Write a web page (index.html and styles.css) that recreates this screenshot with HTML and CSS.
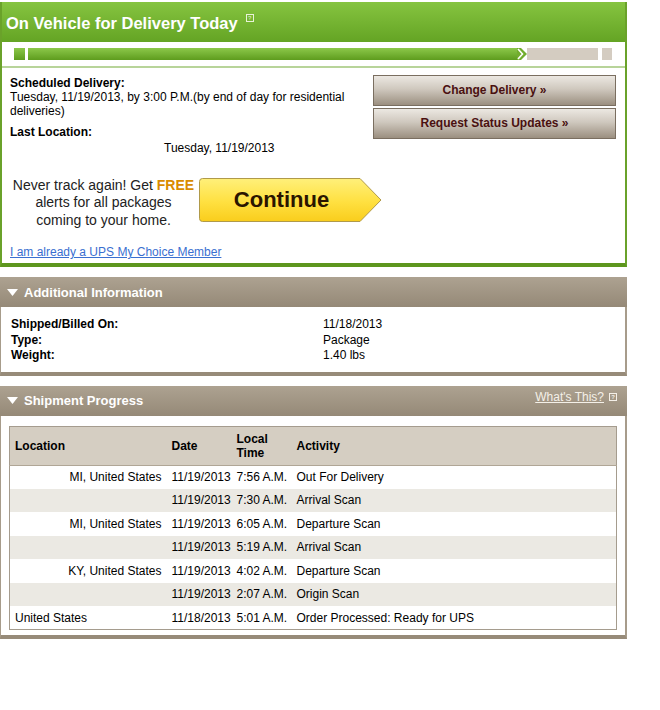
FILE: index.html
```html
<!DOCTYPE html>
<html lang="en">
<head>
    <meta charset="UTF-8">
    <meta name="viewport" content="width=device-width, initial-scale=1.0">
    <title>Tracking Detail</title>
<link rel="stylesheet" href="styles.css">
</head>
<body>
    <div class="status-panel">
        <div class="status-head">
            <h1>On Vehicle for Delivery Today</h1>
            <span class="help-box">?</span>
        </div>
        <div class="progress-strip">
            <div class="prog-sq done"></div>
            <div class="prog-bar done"></div>
            <svg class="prog-arrow" width="10" height="12" viewBox="0 0 10 12">
                <polygon points="0,0 4,0 10,6 4,12 0,12 0,0" fill="#72ad2e"/>
                <polyline points="1,1 5.5,6 1,11" fill="none" stroke="#ffffff" stroke-width="1.6"/>
            </svg>
            <div class="prog-bar todo"></div>
            <div class="prog-sq todo"></div>
        </div>
        <div class="status-body">
            <div class="status-info">
                <div class="label">Scheduled Delivery:</div>
                <div class="value">Tuesday, 11/19/2013, by 3:00 P.M.(by end of day for residential deliveries)</div>
                <div class="label gap">Last Location:</div>
                <div class="last-date">Tuesday, 11/19/2013</div>
            </div>
            <div class="status-actions">
                <a class="grey-btn" href="#">Change Delivery &raquo;</a>
                <a class="grey-btn" href="#">Request Status Updates &raquo;</a>
            </div>
        </div>
        <div class="promo">
            <p class="promo-text">Never track again! Get <b>FREE</b><br>alerts for all packages<br>coming to your home.</p>
            <a class="continue-btn" href="#">
                <svg width="183" height="44" viewBox="0 0 183 44">
                    <defs>
                        <linearGradient id="yel" x1="0" y1="0" x2="0" y2="1">
                            <stop offset="0" stop-color="#fff07a"/>
                            <stop offset="0.55" stop-color="#ffe040"/>
                            <stop offset="1" stop-color="#f9cd1c"/>
                        </linearGradient>
                    </defs>
                    <path d="M3.5 0.5 H161 L182 22 L161 43.5 H3.5 Q0.5 43.5 0.5 40.5 V3.5 Q0.5 0.5 3.5 0.5 Z" fill="url(#yel)" stroke="#b09a4a" stroke-width="1"/>
                </svg>
                <span>Continue</span>
            </a>
        </div>
        <a class="member-link" href="#">I am already a UPS My Choice Member</a>
    </div>

    <div class="grey-panel">
        <div class="grey-head">
            <svg class="tri" width="11" height="7" viewBox="0 0 11 7"><polygon points="0,0 11,0 5.5,7" fill="#ffffff"/></svg>
            Additional Information
        </div>
        <div class="grey-body info-body">
            <div class="info-row"><b>Shipped/Billed On:</b><span>11/18/2013</span></div>
            <div class="info-row"><b>Type:</b><span>Package</span></div>
            <div class="info-row"><b>Weight:</b><span>1.40 lbs</span></div>
        </div>
    </div>

    <div class="grey-panel">
        <div class="grey-head">
            <svg class="tri" width="11" height="7" viewBox="0 0 11 7"><polygon points="0,0 11,0 5.5,7" fill="#ffffff"/></svg>
            Shipment Progress
            <a class="whats-this" href="#">What's This?</a>
            <span class="help-box light">?</span>
        </div>
        <div class="grey-body">
            <table class="progress-table">
                <thead>
                    <tr>
                        <th class="col-loc">Location</th>
                        <th class="col-date">Date</th>
                        <th class="col-time">Local<br>Time</th>
                        <th>Activity</th>
                    </tr>
                </thead>
                <tbody>
                    <tr><td class="right">MI, United States</td><td>11/19/2013</td><td>7:56 A.M.</td><td>Out For Delivery</td></tr>
                    <tr class="alt"><td></td><td>11/19/2013</td><td>7:30 A.M.</td><td>Arrival Scan</td></tr>
                    <tr><td class="right">MI, United States</td><td>11/19/2013</td><td>6:05 A.M.</td><td>Departure Scan</td></tr>
                    <tr class="alt"><td></td><td>11/19/2013</td><td>5:19 A.M.</td><td>Arrival Scan</td></tr>
                    <tr><td class="right">KY, United States</td><td>11/19/2013</td><td>4:02 A.M.</td><td>Departure Scan</td></tr>
                    <tr class="alt"><td></td><td>11/19/2013</td><td>2:07 A.M.</td><td>Origin Scan</td></tr>
                    <tr><td>United States</td><td>11/18/2013</td><td>5:01 A.M.</td><td>Order Processed: Ready for UPS</td></tr>
                </tbody>
            </table>
        </div>
    </div>
</body>
</html>
```

FILE: styles.css
```css
body {
    margin: 0;
    padding: 2px 0 0 0;
    font-family: "Liberation Sans", Arial, sans-serif;
    font-size: 12px;
    color: #000000;
    background: #ffffff;
}

/* green status box */
.status-panel {
    width: 623px;
    border-left: 2px solid #6aa22a;
    border-right: 2px solid #6aa22a;
    border-bottom: 4px solid #5d961e;
}

.status-head {
    height: 40px;
    display: flex;
    align-items: center;
    padding-left: 4px;
    background: linear-gradient(to bottom, #86c440, #64a424);
}

.status-head h1 {
    margin: 0;
    font-size: 16.5px;
    font-weight: bold;
    color: #ffffff;
    position: relative;
    top: 1px;
}

.help-box {
    display: inline-block;
    width: 6px;
    height: 6px;
    border: 1px solid #e8f2d8;
    font-size: 6px;
    line-height: 6px;
    text-align: center;
    color: #e8f2d8;
    margin-left: 8px;
    position: relative;
    top: -4px;
}

.progress-strip {
    display: flex;
    align-items: center;
    height: 24px;
    padding-left: 12px;
    border-bottom: 2px solid #b8d49a;
}

.prog-sq {
    width: 11px;
    height: 12px;
}

.prog-bar {
    height: 12px;
}

.done {
    background: linear-gradient(to bottom, #8cc84a, #5e9c1e);
}

.todo {
    background: #d4ccc1;
}

.prog-bar.done {
    width: 489px;
    margin-left: 3px;
}

.prog-bar.todo {
    width: 71px;
}

.prog-sq.todo {
    width: 10px;
    margin-left: 4px;
}

.status-body {
    display: flex;
    justify-content: space-between;
    padding: 8px 9px 0 8px;
}

.status-info {
    width: 335px;
    line-height: 13.5px;
}

.label {
    font-weight: bold;
    line-height: 14px;
}

.value {
    margin-top: 1px;
}

.label.gap {
    margin-top: 7px;
}

.last-date {
    padding-left: 154px;
    margin-top: 3px;
}

.status-actions {
    width: 243px;
    display: flex;
    flex-direction: column;
    gap: 2px;
    margin-top: -1px;
}

.grey-btn {
    display: block;
    height: 29px;
    line-height: 29px;
    text-align: center;
    font-weight: bold;
    color: #4a1010;
    text-decoration: none;
    border: 1px solid #7a6e60;
    background: linear-gradient(to bottom, #ece8e2, #cfc8be 45%, #9b8f80);
}

.promo {
    display: flex;
    align-items: center;
    padding: 21px 0 0 8px;
}

.promo-text {
    width: 187px;
    margin: 0;
    font-size: 14px;
    line-height: 17.5px;
    text-align: center;
    color: #222222;
}

.promo-text b {
    color: #d98b00;
}

.continue-btn {
    position: relative;
    display: block;
    width: 183px;
    height: 44px;
    margin-left: 2px;
    margin-top: -6px;
    text-decoration: none;
}

.continue-btn svg {
    display: block;
}

.continue-btn span {
    position: absolute;
    left: 0;
    right: 18px;
    top: 0;
    line-height: 44px;
    text-align: center;
    font-size: 22px;
    font-weight: bold;
    color: #2a1500;
}

.member-link {
    display: block;
    margin: 16px 0 0 8px;
    padding-bottom: 4px;
    color: #3a6fd0;
    text-decoration: underline;
}

/* grey boxes */
.grey-panel {
    width: 627px;
    margin-top: 10px;
}

.grey-head {
    height: 30px;
    display: flex;
    align-items: center;
    padding: 0 10px 0 7px;
    background: linear-gradient(to bottom, #ada291, #958977);
    color: #ffffff;
    font-size: 13px;
    font-weight: bold;
}

.tri {
    margin-right: 6px;
}

.whats-this {
    margin-left: auto;
    font-weight: normal;
    font-size: 12px;
    color: #f4f0e8;
    text-decoration: underline;
    position: relative;
    top: -4px;
}

.help-box.light {
    border-color: #f4f0e8;
    color: #f4f0e8;
    margin-left: 5px;
    top: -4px;
}

.grey-body {
    border-left: 1px solid #a79c8b;
    border-right: 2px solid #a79c8b;
    border-bottom: 4px solid #978b79;
    padding: 10px 8px 5px 8px;
    background: #ffffff;
}

.info-body {
    padding: 10px 8px 8px 10px;
}

.info-row {
    display: flex;
    line-height: 15.5px;
}

.info-row b {
    width: 312px;
}

.progress-table {
    width: 100%;
    table-layout: fixed;
    border-collapse: collapse;
    border: 1px solid #a59c8e;
}

.progress-table th,
.progress-table td {
    box-sizing: border-box;
    padding: 0 4px;
}

.progress-table th {
    background: #d5cec2;
    text-align: left;
    font-weight: bold;
    height: 39px;
    line-height: 14px;
    border-bottom: 1px solid #b0a696;
}

.progress-table td {
    height: 23.5px;
    white-space: nowrap;
}

.progress-table th:first-child,
.progress-table td:first-child {
    padding-left: 5px;
}

.progress-table th:nth-child(2),
.progress-table td:nth-child(2) {
    padding-left: 5px;
}

.col-loc {
    width: 157px;
}

.col-date {
    width: 66px;
}

.col-time {
    width: 60px;
}

.progress-table td.right {
    text-align: right;
    padding-right: 5px;
}

.progress-table tr.alt td {
    background: #ebe9e3;
}
```
